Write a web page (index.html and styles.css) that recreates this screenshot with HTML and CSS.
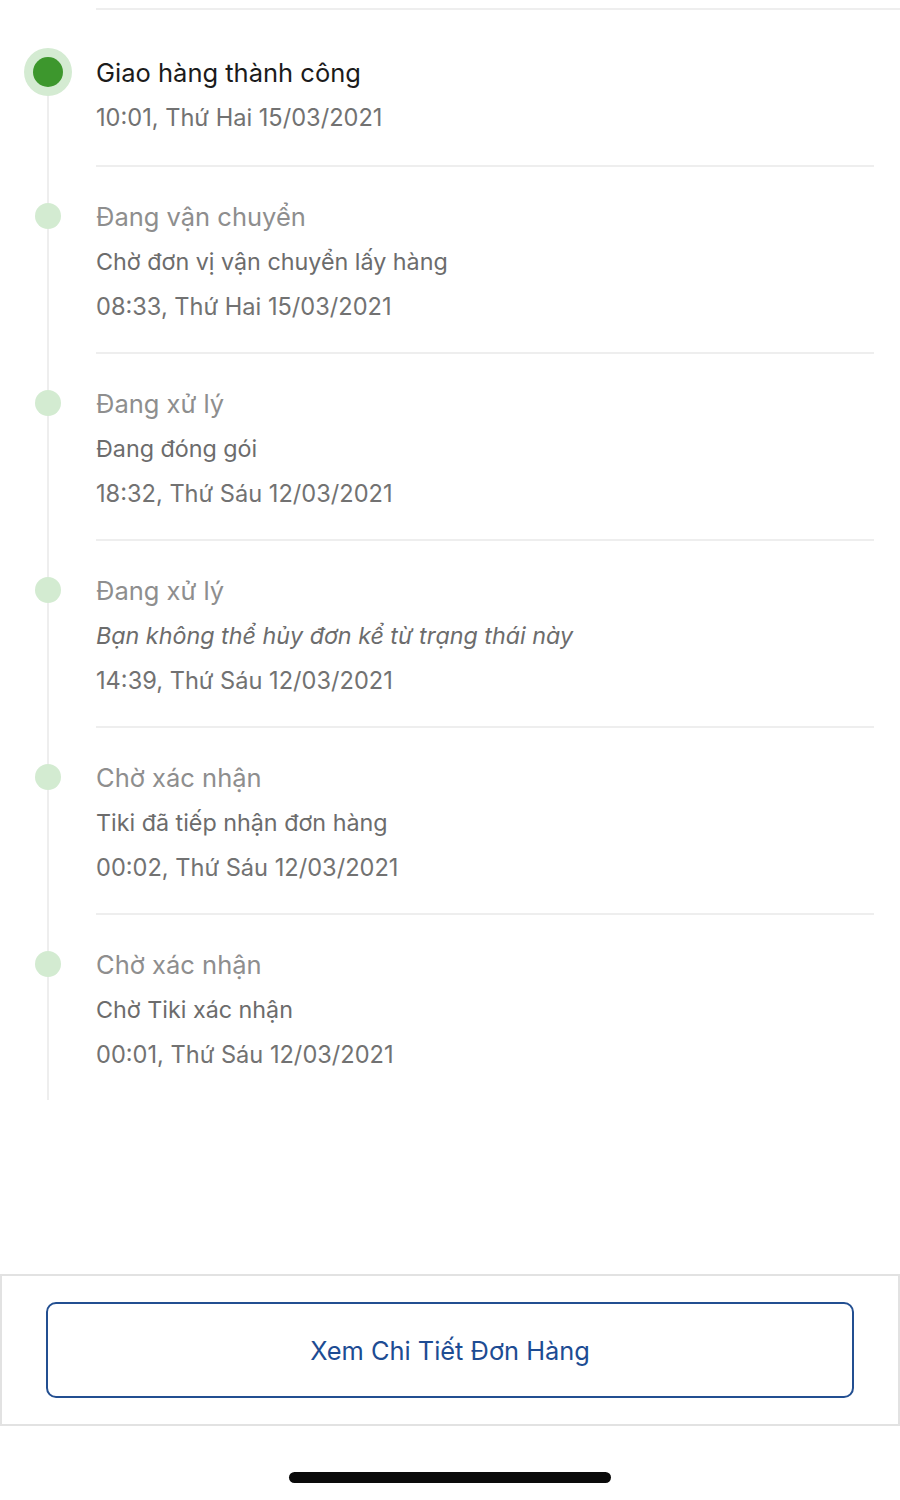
FILE: index.html
```html
<!DOCTYPE html>
<html lang="vi">
<head>
<meta charset="utf-8">
<title>Theo dõi đơn hàng</title>
<link rel="stylesheet" href="styles.css">
</head>
<body>
<div class="page">
  <div class="top-divider"></div>
  <div class="timeline">
    <div class="item first">
      <div class="marker"><span class="dot active"></span></div>
      <div class="content">
        <div class="title">Giao hàng thành công</div>
        <div class="time">10:01, Thứ Hai 15/03/2021</div>
      </div>
    </div>
    <div class="item">
      <div class="marker"><span class="dot"></span></div>
      <div class="content">
        <div class="title">Đang vận chuyển</div>
        <div class="desc">Chờ đơn vị vận chuyển lấy hàng</div>
        <div class="time">08:33, Thứ Hai 15/03/2021</div>
      </div>
    </div>
    <div class="item">
      <div class="marker"><span class="dot"></span></div>
      <div class="content">
        <div class="title">Đang xử lý</div>
        <div class="desc">Đang đóng gói</div>
        <div class="time">18:32, Thứ Sáu 12/03/2021</div>
      </div>
    </div>
    <div class="item">
      <div class="marker"><span class="dot"></span></div>
      <div class="content">
        <div class="title">Đang xử lý</div>
        <div class="desc italic">Bạn không thể hủy đơn kể từ trạng thái này</div>
        <div class="time">14:39, Thứ Sáu 12/03/2021</div>
      </div>
    </div>
    <div class="item">
      <div class="marker"><span class="dot"></span></div>
      <div class="content">
        <div class="title">Chờ xác nhận</div>
        <div class="desc">Tiki đã tiếp nhận đơn hàng</div>
        <div class="time">00:02, Thứ Sáu 12/03/2021</div>
      </div>
    </div>
    <div class="item last">
      <div class="marker"><span class="dot"></span></div>
      <div class="content">
        <div class="title">Chờ xác nhận</div>
        <div class="desc">Chờ Tiki xác nhận</div>
        <div class="time">00:01, Thứ Sáu 12/03/2021</div>
      </div>
    </div>
  </div>
  <div class="footer">
    <button class="detail-btn">Xem Chi Tiết Đơn Hàng</button>
  </div>
  <div class="home-area"><span class="home-indicator"></span></div>
</div>
</body>
</html>
```
FILE: styles.css
```css
* { box-sizing: border-box; }
html, body {
  margin: 0;
  padding: 0;
  background: #fff;
}
body {
  font-family: Inter, Roboto, "Noto Sans", "Liberation Sans", sans-serif;
  -webkit-font-smoothing: antialiased;
}
.page {
  width: 900px;
  min-height: 1500px;
  display: flex;
  flex-direction: column;
}
.top-divider {
  margin-top: 8px;
  margin-left: 96px;
  height: 2px;
  background: #eeeeee;
}
.timeline {
  position: relative;
  display: flex;
  flex-direction: column;
}
.timeline::before {
  content: "";
  position: absolute;
  left: 47px;
  top: 64px;
  bottom: 0;
  width: 2px;
  background: #eeeeee;
}
.item {
  display: grid;
  grid-template-columns: 96px 1fr;
}
.marker {
  position: relative;
  z-index: 1;
  display: flex;
  justify-content: center;
  align-items: flex-start;
  padding-top: 36px;
}
.item.first .marker { padding-top: 47px; }
.dot {
  display: block;
  width: 26px;
  height: 26px;
  border-radius: 50%;
  background: #d3ebd1;
}
.dot.active {
  width: 30px;
  height: 30px;
  background: #3d972d;
  box-shadow: 0 0 0 9px #d4ebd2;
}
.content {
  margin-right: 26px;
  padding: 27px 0 23px;
  border-bottom: 2px solid #eeeeee;
}
.item.first .content { padding-top: 40px; padding-bottom: 25px; }
.item.last .content { border-bottom: none; }
.title, .desc, .time {
  line-height: 45px;
  white-space: nowrap;
}
.title { font-size: 25.5px; color: #8e8e8e; }
.item.first .title { color: #1b1b1b; }
.desc { font-size: 23.3px; color: #6c6c6c; }
.desc.italic { font-style: italic; }
.time { font-size: 23.6px; color: #727272; }
.footer {
  margin-top: 174px;
  border: 2px solid #e2e2e2;
  padding: 26px 44px 26px;
}
.detail-btn {
  display: block;
  width: 100%;
  height: 96px;
  background: #fff;
  border: 2px solid #234f91;
  border-radius: 10px;
  color: #1d4c93;
  font-family: Inter, Roboto, "Noto Sans", "Liberation Sans", sans-serif;
  font-size: 25.4px;
}
.home-area {
  display: flex;
  justify-content: center;
  padding-top: 46px;
}
.home-indicator {
  display: block;
  width: 322px;
  height: 11px;
  border-radius: 6px;
  background: #0a0a0a;
}
```
